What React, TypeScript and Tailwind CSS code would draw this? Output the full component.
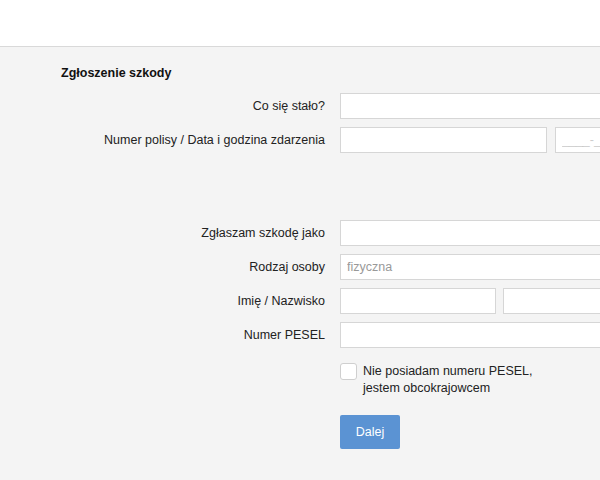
import React from "react";

const font = { fontFamily: '"Liberation Sans", Arial, sans-serif' };

const inputCls =
  "h-[26px] shrink-0 border border-[#d6d6d6] bg-white px-[6px] text-[12.5px] text-[#999] outline-none";

function Row({ label, children }: { label: string; children: React.ReactNode }) {
  return (
    <div className="flex items-center h-[26px]">
      <label className="w-[325px] shrink-0 text-right text-[12.5px] text-[#222]">{label}</label>
      <div className="ml-[15px] flex gap-[8px]">{children}</div>
    </div>
  );
}

export default function App() {
  return (
    <div className="w-[600px] h-[480px] overflow-hidden bg-[#f4f4f4]" style={font}>
      <div className="h-[47px] bg-white border-b border-[#d9d9d9]" />
      <div className="pt-[18px]">
        <h2 className="pl-[61px] text-[12.5px] font-bold leading-4 text-[#111]">Zgłoszenie szkody</h2>

        <div className="mt-[12px] flex flex-col gap-[8px]">
          <Row label="Co się stało?">
            <input className={`${inputCls} w-[300px]`} />
          </Row>
          <Row label="Numer polisy / Data i godzina zdarzenia">
            <input className={`${inputCls} w-[207px]`} />
            <input className={`${inputCls} w-[200px]`} placeholder="____-__-__ __:__" />
          </Row>
        </div>

        <div className="mt-[67px] flex flex-col gap-[8px]">
          <Row label="Zgłaszam szkodę jako">
            <input className={`${inputCls} w-[300px]`} />
          </Row>
          <Row label="Rodzaj osoby">
            <input className={`${inputCls} w-[300px] placeholder:text-[#999]`} placeholder="fizyczna" />
          </Row>
          <Row label="Imię / Nazwisko">
            <input className={`${inputCls} w-[156px]`} />
            <input className={`${inputCls} w-[156px] -ml-[1px]`} />
          </Row>
          <Row label="Numer PESEL">
            <input className={`${inputCls} w-[300px]`} />
          </Row>
        </div>

        <div className="ml-[340px] mt-[15px] flex items-start gap-[6px]">
          <span className="block w-[17px] h-[17px] shrink-0 rounded-[3px] border border-[#cfcfcf] bg-white" />
          <p className="text-[12.5px] leading-[17px] text-[#222]">
            Nie posiadam numeru PESEL,
            <br />
            jestem obcokrajowcem
          </p>
        </div>

        <button className="ml-[340px] mt-[18px] w-[60px] h-[34px] rounded-[2px] bg-[#5b93d3] text-[12.5px] text-white">
          Dalej
        </button>
      </div>
    </div>
  );
}
